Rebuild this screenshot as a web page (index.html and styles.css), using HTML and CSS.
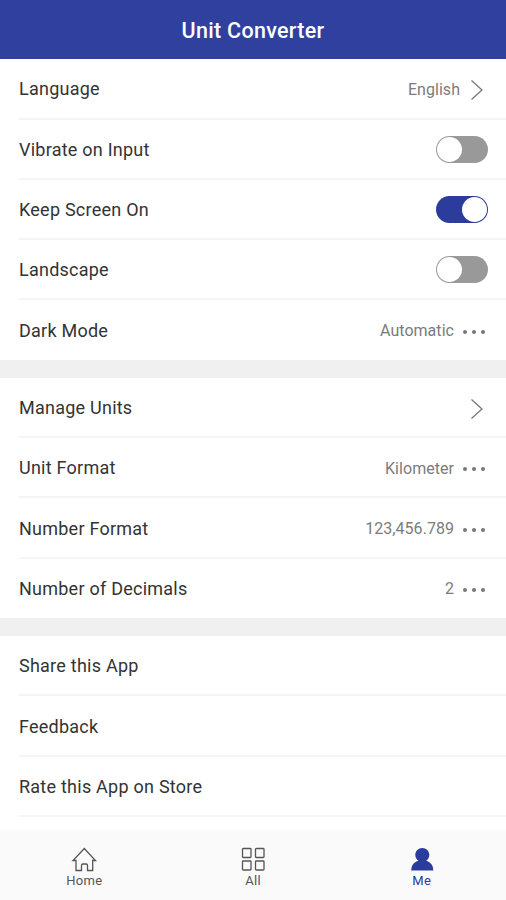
FILE: index.html
```html
<!DOCTYPE html>
<html lang="en">
<head>
<meta charset="utf-8">
<title>Unit Converter</title>
<link rel="stylesheet" href="styles.css">
</head>
<body>
<div class="app">
  <header class="header"><h1 class="title">Unit Converter</h1></header>
  <main class="content">
    <section class="group">
      <div class="row"><span class="label">Language</span><span class="value value-link">English</span><svg class="chevron" viewBox="0 0 14 22"><path d="M1.500 1.500 12 11 1.500 20.500"/></svg></div>
      <div class="row"><span class="label">Vibrate on Input</span><span class="switch"><span class="knob"></span></span></div>
      <div class="row"><span class="label">Keep Screen On</span><span class="switch on"><span class="knob"></span></span></div>
      <div class="row"><span class="label">Landscape</span><span class="switch"><span class="knob"></span></span></div>
      <div class="row"><span class="label">Dark Mode</span><span class="value">Automatic</span><span class="dots"><i></i><i></i><i></i></span></div>
    </section>
    <section class="group">
      <div class="row"><span class="label">Manage Units</span><svg class="chevron" viewBox="0 0 14 22"><path d="M1.500 1.500 12 11 1.500 20.500"/></svg></div>
      <div class="row"><span class="label">Unit Format</span><span class="value">Kilometer</span><span class="dots"><i></i><i></i><i></i></span></div>
      <div class="row"><span class="label">Number Format</span><span class="value">123,456.789</span><span class="dots"><i></i><i></i><i></i></span></div>
      <div class="row"><span class="label">Number of Decimals</span><span class="value">2</span><span class="dots"><i></i><i></i><i></i></span></div>
    </section>
    <section class="group">
      <div class="row"><span class="label">Share this App</span></div>
      <div class="row"><span class="label">Feedback</span></div>
      <div class="row"><span class="label">Rate this App on Store</span></div>
      <div class="row"></div>
    </section>
  </main>
  <nav class="tabs">
    <a class="tab"><svg class="icon" viewBox="0 0 26 26"><path d="M5 13.500H2L13.300 1.500l11.200 12H21.700V23.500H16.500v-5a1.500 1.500 0 0 0-1.500-1.500h-3a1.500 1.500 0 0 0-1.500 1.500v5H5Z"/></svg><span>Home</span></a>
    <a class="tab"><svg class="icon" viewBox="0 0 26 26"><rect x="2.500" y="1.500" width="8.500" height="9" rx=".8"/><rect x="15.500" y="1.500" width="8.500" height="9" rx=".8"/><rect x="2.500" y="14" width="8.500" height="9" rx=".8"/><rect x="15.500" y="14" width="8.500" height="9" rx=".8"/></svg><span>All</span></a>
    <a class="tab active"><svg class="icon" viewBox="0 0 26 26"><path d="M13.300 1c4 0 7 3 7 6.800 0 2.700-1.200 4.700-3.200 6 4.200 1.400 7.200 4.200 7.200 9.700H2.300c0-5.500 3-8.300 7.200-9.700-2-1.300-3.200-3.300-3.200-6C6.300 4 9.300 1 13.300 1Z"/></svg><span>Me</span></a>
  </nav>
</div>
</body>
</html>
```

FILE: styles.css
```css
* { box-sizing: border-box; }

body {
  margin: 0;
  font-family: Roboto, "Liberation Sans", sans-serif;
  color: #333;
  background: #fff;
}

.app {
  display: flex;
  flex-direction: column;
  height: 900px;
  overflow: hidden;
}

.header {
  display: flex;
  flex: none;
  align-items: center;
  justify-content: center;
  height: 59.300px;
  padding-top: 2px;
  background: #2f409f;
}

.title {
  margin: 0;
  color: #fff;
  font-size: 21.500px;
  font-weight: 500;
  letter-spacing: 0.300px;
}

.content {
  display: flex;
  flex: 1;
  flex-direction: column;
  gap: 18px;
  min-height: 0;
  overflow: hidden;
  background: #f0f0f0;
}

.group {
  flex: none;
  padding-left: 19px;
  background: #fff;
}

.row {
  display: flex;
  align-items: center;
  height: 60.300px;
  padding: 1px 18px 0 0;
  border-bottom: 2px solid #f5f5f5;
}

.group .row:last-child {
  height: 59.400px;
  border-bottom: 0;
  padding-bottom: 1px;
}

.label {
  flex: 1;
  font-size: 18px;
  letter-spacing: 0.240px;
}

.value {
  margin: 1px 9px 0 0;
  color: #7c7c7c;
  font-size: 16px;
  letter-spacing: 0.040px;
}

.value-link { margin-right: 10px; }

.chevron {
  width: 14px;
  height: 22px;
  margin: 3px 4px 0 0;
  fill: none;
  stroke: #777;
  stroke-width: 1.300;
}

.dots {
  display: flex;
  gap: 5px;
  margin: 3px 3px 0 0;
}

.dots i {
  width: 4px;
  height: 4px;
  border-radius: 50%;
  background: #777;
}

.switch {
  display: flex;
  width: 52px;
  height: 27px;
  padding: 1px;
  border-radius: 14px;
  background: #999;
}

.switch.on {
  justify-content: flex-end;
  background: #2c3c9c;
}

.knob {
  width: 25px;
  height: 25px;
  border-radius: 50%;
  background: #fff;
}

.tabs {
  display: flex;
  flex: none;
  height: 70.500px;
  background: #fafafa;
}

.tab {
  display: flex;
  flex: 1;
  flex-direction: column;
  align-items: center;
  padding-top: 17px;
  color: #555;
  font-size: 13px;
  line-height: 15px;
  letter-spacing: 0.300px;
}

.icon {
  width: 26px;
  height: 26px;
  fill: none;
  stroke: currentColor;
  stroke-width: 1.300;
}

.active { color: #2c3c9c; }
.active .icon { fill: currentColor; stroke: none; }
```
